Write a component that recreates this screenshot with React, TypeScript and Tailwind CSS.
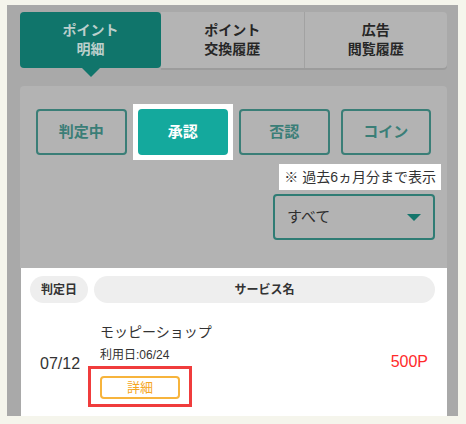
const FONT = "font-['Liberation_Sans','Noto_Sans_CJK_JP',sans-serif]";

const FILTERS = ["判定中", "承認", "否認", "コイン"];

export default function App() {
  return (
    <div className={`w-[466px] h-[424px] bg-[#f5f5ec] pt-[5px] pl-[7px] ${FONT}`}>
      <div className="w-[451px] h-[411px] bg-[#a9a9a9] pl-[13px] pr-[11px] pt-[7px] overflow-hidden">
        {/* Tabs */}
        <div className="flex h-[56px]">
          <div className="relative w-[141px] rounded-[4px] bg-[#10756b] flex flex-col items-center justify-center text-[14px] leading-[19px] font-bold text-[#bccfcc]">
            <span>ポイント</span>
            <span>明細</span>
            <div className="absolute left-1/2 -translate-x-1/2 top-full w-0 h-0 border-l-[9px] border-r-[9px] border-t-[9px] border-l-transparent border-r-transparent border-t-[#10756b]" />
          </div>
          <div className="flex-1 flex rounded-r-[4px] bg-[#b4b4b4] shadow-[0_2px_0_#9c9c9c]">
            <div className="flex-1 flex flex-col items-center justify-center text-[14px] leading-[19px] font-bold text-[#262626] border-r border-[#a2a2a2]">
              <span>ポイント</span>
              <span>交換履歴</span>
            </div>
            <div className="flex-1 flex flex-col items-center justify-center text-[14px] leading-[19px] font-bold text-[#262626]">
              <span>広告</span>
              <span>閲覧履歴</span>
            </div>
          </div>
        </div>

        {/* Filter panel */}
        <div className="mt-[18px] bg-[#b3b3b3] rounded-t-[4px] pt-[23px] pb-[28px]">
          <div className="grid grid-cols-4 gap-[11px] px-[16px]">
            {FILTERS.map(f =>
              f === "承認" ? (
                <div key={f} className="-m-[5px] p-[5px] bg-white">
                  <div className="h-[46px] rounded-[4px] bg-[#14a99d] flex items-center justify-center text-[15px] font-bold text-white">
                    {f}
                  </div>
                </div>
              ) : (
                <div key={f} className="h-[46px] rounded-[4px] border-2 border-[#3a7e77] flex items-center justify-center text-[15px] font-bold text-[#3a7e77]">
                  {f}
                </div>
              )
            )}
          </div>
          <div className="flex justify-end pr-[6px] mt-[9px]">
            <div className="bg-white h-[26px] px-[5px] flex items-center text-[14px] text-[#333]">※ 過去6ヵ月分まで表示</div>
          </div>
          <div className="flex justify-end pr-[12px] mt-[4px]">
            <div className="w-[162px] h-[46px] border-2 border-[#2f7c74] rounded-[4px] flex items-center justify-between pl-[12px] pr-[12px] text-[15px] text-[#2e2e2e]">
              <span>すべて</span>
              <div className="w-0 h-0 border-l-[7px] border-r-[7px] border-t-[7px] border-l-transparent border-r-transparent border-t-[#13756b]" />
            </div>
          </div>
        </div>

        {/* List */}
        <div className="bg-white ml-[1px] pt-[8px] h-[160px]">
          <div className="flex gap-[6px] pl-[9px] pr-[12px]">
            <div className="w-[58px] h-[27px] rounded-full bg-[#eeeeee] flex items-center justify-center text-[12px] font-bold text-[#333]">判定日</div>
            <div className="flex-1 h-[27px] rounded-full bg-[#eeeeee] flex items-center justify-center text-[12px] font-bold text-[#333]">サービス名</div>
          </div>
          <div className="flex items-start pl-[19px] pr-[19px] pt-[19px]">
            <div className="w-[60px] pt-[30px] text-[16px] text-[#333]">07/12</div>
            <div className="flex-1 flex flex-col">
              <div className="text-[14px] leading-[20px] text-[#333]">モッピーショップ</div>
              <div className="mt-[5px] text-[12px] leading-[16px] text-[#333]">利用日:06/24</div>
              <div className="relative mt-[13px] w-[80px]">
                <div className="h-[23px] rounded-[4px] border-2 border-[#f7b43c] flex items-center justify-center text-[13px] text-[#f5a623]">詳細</div>
                <div className="absolute -left-[12px] -right-[12px] -top-[10px] -bottom-[8px] border-[3px] border-[#f03c3c]" />
              </div>
            </div>
            <div className="pt-[28px] text-[16px] text-[#ff2a2a]">500P</div>
          </div>
        </div>
      </div>
    </div>
  );
}
